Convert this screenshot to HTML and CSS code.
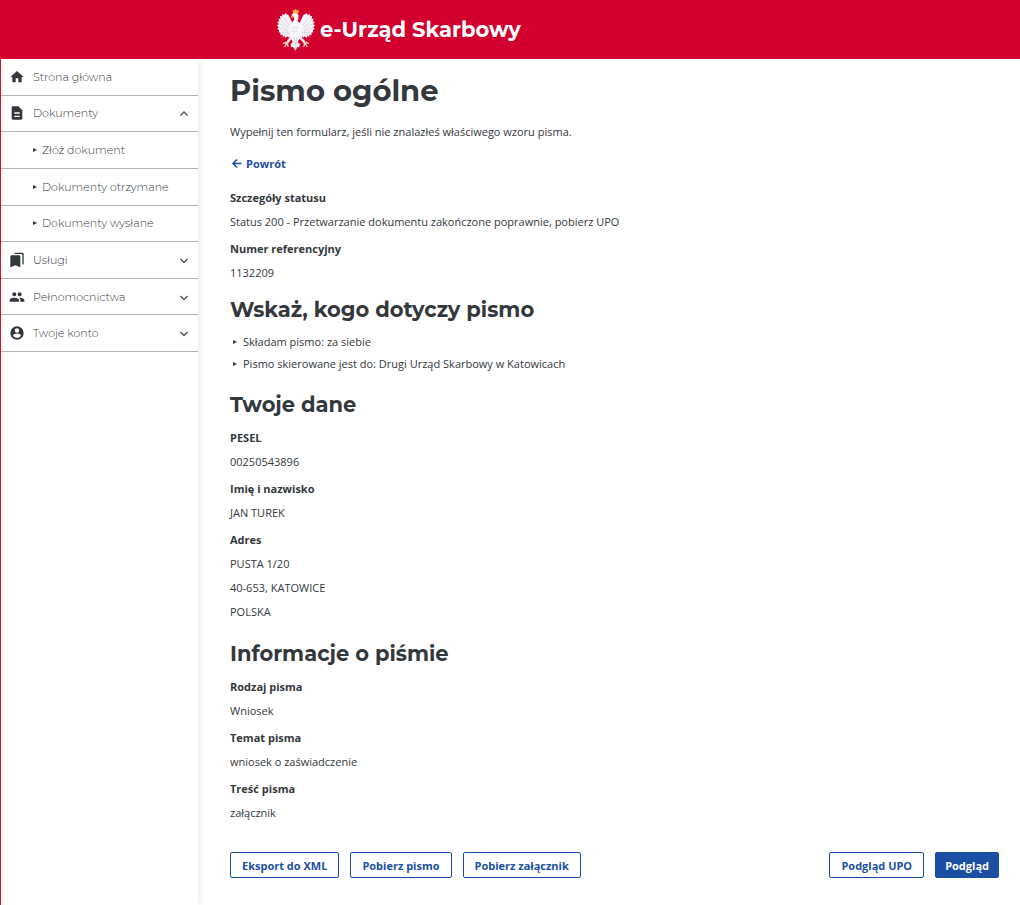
FILE: index.html
```html
<!DOCTYPE html>
<html lang="pl">
<head>
    <meta charset="UTF-8">
    <meta name="viewport" content="width=device-width, initial-scale=1.0">
    <title>e-Urząd Skarbowy</title>
    <link rel="stylesheet" href="styles.css">
</head>
<body>
    <header class="header">
        <svg class="eagle" viewBox="0 0 144 150" aria-hidden="true">
            <!-- wings -->
            <path fill="#f4f4f7" d="M62 58 L57 44 L50 31 L40 25 L36 30 L31 27 L30 34 L24 33 L25 41 L19 41 L22 49 L16 51 L20 58 L15 61 L20 67 L16 72 L22 76 L20 82 L26 83 L25 90 L32 89 L32 96 L38 93 L40 99 L46 94 L50 98 L56 90 L62 87 Z"/>
            <path fill="#f4f4f7" d="M82 58 L87 44 L94 31 L104 25 L108 30 L113 27 L115 34 L120 33 L119 41 L125 41 L122 49 L128 51 L124 58 L129 61 L124 67 L128 72 L122 76 L124 82 L118 83 L119 90 L112 89 L112 96 L106 93 L104 99 L98 94 L94 98 L88 90 L82 87 Z"/>
            <!-- head, body and tail -->
            <path fill="#f8f8fa" d="M58 31 L64 23 L74 23 L80 31 L79 42 L76 48 L84 54 L91 60 L88 78 L92 91 L88 100 L80 104 L77 112 L84 118 L81 127 L76 126 L70 137 L64 126 L58 127 L56 118 L62 112 L59 104 L54 100 L51 91 L57 78 L54 60 L60 53 L67 43 L66 37 Z"/>
            <!-- legs -->
            <path fill="none" stroke="#eeeef2" stroke-width="7" d="M58 97 L46 112 M84 97 L98 112"/>
            <path fill="none" stroke="#e4d3c2" stroke-width="4" d="M33 116 L42 112 L50 114 M38 126 L44 114 L49 125 M111 116 L102 112 L94 114 M106 126 L99 114 L95 125"/>
            <!-- feathers -->
            <path fill="none" stroke="#c9c9d3" stroke-width="2" d="M34 35 L51 61 M26 45 L49 68 M22 56 L47 74 M23 69 L48 79 M28 81 L50 83 M38 91 L54 84 M111 35 L93 61 M119 45 L95 68 M122 56 L97 74 M121 69 L96 79 M117 81 L94 83 M106 91 L90 84 M60 65 L66 70 L72 65 L78 70 M60 77 L66 82 L72 77 L78 82 M66 94 V120 M74 94 V120 M70 104 V132"/>
            <!-- crown and beak -->
            <path fill="#f3b63f" d="M61 13 L66 17 L71 11 L76 17 L81 13 L79 25 L64 25 Z M63 31 L56 35 L60 39 L66 36 Z"/>
        </svg>
        <span class="brand">e-Urząd Skarbowy</span>
    </header>

    <div class="layout">
        <nav class="sidebar">
            <ul class="menu">
                <li>
                    <a class="menu-item" href="#">
                        <svg class="icon" viewBox="0 0 24 24"><path d="M10 20v-6h4v6h5v-8h3L12 3 2 12h3v8z"/></svg>
                        Strona główna
                    </a>
                </li>
                <li>
                    <button class="menu-item" type="button" aria-expanded="true">
                        <svg class="icon" viewBox="0 0 24 24"><path d="M14 2H6c-1.100 0-2 .9-2 2v16c0 1.100.9 2 2 2h12c1.100 0 2-.9 2-2V8zM8 11h8v2H8zm0 5h8v2H8z"/></svg>
                        Dokumenty
                        <svg class="chevron" viewBox="0 0 20 20"><path d="M3 15l7-7 7 7"/></svg>
                    </button>
                    <ul class="submenu">
                        <li><a class="menu-item sub-item" href="#">Złóż dokument</a></li>
                        <li><a class="menu-item sub-item" href="#">Dokumenty otrzymane</a></li>
                        <li><a class="menu-item sub-item" href="#">Dokumenty wysłane</a></li>
                    </ul>
                </li>
                <li>
                    <button class="menu-item" type="button">
                        <svg class="icon" viewBox="0 0 24 24"><path d="M20 18l2 1V3c0-1.100-.9-2-2-2H9.990C8.890 1 8 1.900 8 3h10c1.100 0 2 .9 2 2zM15 5H4c-1.100 0-2 .9-2 2v16l7.500-3 7.500 3V7c0-1.100-.9-2-2-2z"/></svg>
                        Usługi
                        <svg class="chevron" viewBox="0 0 20 20"><path d="M3 8l7 7 7-7"/></svg>
                    </button>
                </li>
                <li>
                    <button class="menu-item" type="button">
                        <svg class="icon" viewBox="0 0 24 24"><path d="M16 11c1.660 0 2.990-1.340 2.990-3S17.660 5 16 5s-3 1.340-3 3 1.340 3 3 3zm-8 0c1.660 0 2.990-1.340 2.990-3S9.660 5 8 5 5 6.340 5 8s1.340 3 3 3zm0 2c-2.330 0-7 1.170-7 3.500V19h14v-2.500c0-2.330-4.670-3.500-7-3.500zm8 0c-.29 0-.62.020-.97.050 1.160.84 1.970 1.970 1.970 3.450V19h6v-2.500c0-2.330-4.670-3.500-7-3.500z"/></svg>
                        Pełnomocnictwa
                        <svg class="chevron" viewBox="0 0 20 20"><path d="M3 8l7 7 7-7"/></svg>
                    </button>
                </li>
                <li>
                    <button class="menu-item" type="button">
                        <svg class="icon" viewBox="0 0 24 24"><path d="M12 2a10 10 0 1 0 0 20 10 10 0 0 0 0-20zm0 3a3.300 3.300 0 1 1 0 6.600A3.300 3.300 0 0 1 12 5zm0 14.200c-2.500 0-4.700-1.300-6-3.200 0-2 4-3.100 6-3.100s6 1.100 6 3.100c-1.300 1.900-3.500 3.200-6 3.200z"/></svg>
                        Twoje konto
                        <svg class="chevron" viewBox="0 0 20 20"><path d="M3 8l7 7 7-7"/></svg>
                    </button>
                </li>
            </ul>
        </nav>

        <main class="content">
            <h1>Pismo ogólne</h1>
            <p class="intro">Wypełnij ten formularz, jeśli nie znalazłeś właściwego wzoru pisma.</p>
            <a class="back" href="#">
                <svg class="arrow" viewBox="0 0 24 24"><path d="M21 11H4M12 3l-8 8 8 8"/></svg>
                Powrót
            </a>

            <dl>
                <dt>Szczegóły statusu</dt>
                <dd>Status 200 - Przetwarzanie dokumentu zakończone poprawnie, pobierz UPO</dd>
                <dt>Numer referencyjny</dt>
                <dd>1132209</dd>
            </dl>

            <section class="section">
                <h2>Wskaż, kogo dotyczy pismo</h2>
                <ul class="list">
                    <li>Składam pismo: za siebie</li>
                    <li>Pismo skierowane jest do: Drugi Urząd Skarbowy w Katowicach</li>
                </ul>
            </section>

            <section class="section">
                <h2>Twoje dane</h2>
                <dl>
                    <dt>PESEL</dt>
                    <dd>00250543896</dd>
                    <dt>Imię i nazwisko</dt>
                    <dd>JAN TUREK</dd>
                    <dt>Adres</dt>
                    <dd>PUSTA 1/20</dd>
                    <dd>40-653, KATOWICE</dd>
                    <dd>POLSKA</dd>
                </dl>
            </section>

            <section class="section">
                <h2>Informacje o piśmie</h2>
                <dl>
                    <dt>Rodzaj pisma</dt>
                    <dd>Wniosek</dd>
                    <dt>Temat pisma</dt>
                    <dd>wniosek o zaświadczenie</dd>
                    <dt>Treść pisma</dt>
                    <dd>załącznik</dd>
                </dl>
            </section>

            <div class="actions">
                <button class="btn" type="button">Eksport do XML</button>
                <button class="btn" type="button">Pobierz pismo</button>
                <button class="btn" type="button">Pobierz załącznik</button>
                <button class="btn push-right" type="button">Podgląd UPO</button>
                <button class="btn btn-primary" type="button">Podgląd</button>
            </div>
        </main>
    </div>
</body>
</html>
```

FILE: styles.css
```css
*{
    box-sizing: border-box;
    margin: 0;
    padding: 0;
}
body{
    display: flex;
    flex-direction: column;
    min-height: 100vh;
    font-family: "Open Sans", sans-serif;
    font-size: 11px;
    line-height: 24px;
    color: #33383d;
    background-color: white;
}
ul{
    list-style: none;
}

/* header */
.header{
    display: flex;
    align-items: center;
    height: 59px;
    padding-left: 272px;
    background-color: #d2002e;
}
.eagle{
    width: 48px;
    height: 50px;
}
.brand{
    font-family: Montserrat, Inter, sans-serif;
    font-size: 21px;
    font-weight: 700;
    color: white;
}

.layout{
    display: flex;
    flex: 1;
}

/* sidebar */
.sidebar{
    flex: none;
    width: 198px;
    border-left: 1px solid #d9132f;
    box-shadow: 4px 0 6px -2px rgba(0, 0, 0, 0.08);
}
.menu{
    display: grid;
    grid-template-rows: repeat(8, 1fr);
    height: 293px;
}
.menu li,
.submenu{
    display: contents;
}
.menu-item{
    display: flex;
    align-items: center;
    gap: 8px;
    padding: 0 8px;
    border: none;
    border-bottom: 1px solid #b3b3b3;
    background: none;
    font-family: Montserrat, Inter, sans-serif;
    font-size: 11px;
    font-weight: 300;
    line-height: 18px;
    color: #33383d;
    text-align: left;
    text-decoration: none;
}
.sub-item{
    gap: 5px;
    padding-left: 32px;
}
.sub-item::before,
.list li::before{
    content: "";
    border-left: 4px solid #33383d;
    border-top: 2px solid transparent;
    border-bottom: 2px solid transparent;
}
.icon{
    width: 16px;
    height: 16px;
    fill: #33383d;
}
.chevron{
    width: 10px;
    height: 10px;
    margin-left: auto;
    margin-right: 1px;
    fill: none;
    stroke: #55595e;
    stroke-width: 3;
}

/* content */
.content{
    flex: 1;
    padding: 12px 21px 27px 32px;
}
h1, h2{
    font-family: Montserrat, Inter, sans-serif;
    font-weight: 700;
}
h1{
    font-size: 29px;
    line-height: 40px;
}
h2{
    margin: 9px 0 5px;
    font-size: 21px;
    line-height: 32px;
}
.intro{
    margin: 9px 0 8px;
}
.back{
    display: inline-flex;
    align-items: center;
    gap: 3px;
    margin-bottom: 7px;
    padding-left: 1px;
    font-weight: 700;
    color: #1b4fa3;
    text-decoration: none;
}
.arrow{
    width: 12px;
    height: 12px;
    fill: none;
    stroke: #1b4fa3;
    stroke-width: 3;
}
dt{
    margin-top: 3px;
    font-weight: 700;
}
.section{
    margin-bottom: 14px;
}
.list li{
    display: flex;
    align-items: center;
    gap: 6px;
    padding-left: 3px;
    line-height: 22px;
}
.actions{
    display: flex;
    gap: 11px;
    margin-top: 27px;
}
.btn{
    height: 26px;
    padding: 0 11px;
    border: 1px solid #1b4fa3;
    border-radius: 2px;
    background-color: white;
    font-family: inherit;
    font-size: 11px;
    font-weight: 700;
    color: #1b4fa3;
}
.push-right{
    margin-left: auto;
}
.btn-primary{
    padding: 0 9px;
    background-color: #1b4fa3;
    color: white;
}
```
